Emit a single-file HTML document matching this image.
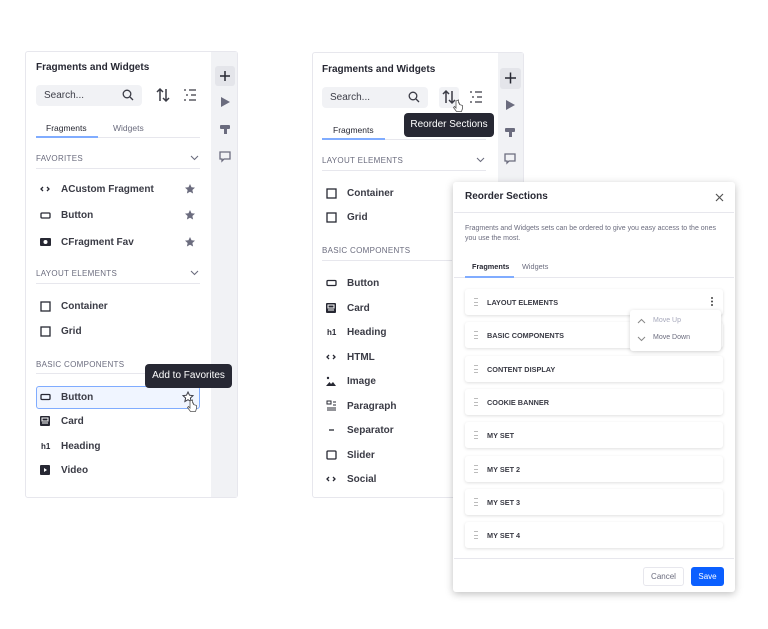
<!DOCTYPE html>
<html><head><meta charset="utf-8"><style>
*{box-sizing:border-box;margin:0;padding:0}
body{width:768px;height:629px;background:#fff;position:relative;overflow:hidden;font-family:"Liberation Sans",sans-serif;color:#272833}
.a{position:absolute}
.panel{position:absolute;background:#fff;border:1px solid #e7e7ed;border-radius:3px}
.side{position:absolute;background:#f1f2f5}
.title{position:absolute;font-size:10px;font-weight:bold;color:#272833}
.search{position:absolute;background:#f1f2f5;border-radius:4px;font-size:10px;color:#3d3e48;padding:5px 0 0 8px;height:21px}
.t{position:absolute;font-size:10px;font-weight:bold;color:#3a3b45;line-height:12px;margin-top:-5px}
.sec{position:absolute;font-size:8px;color:#6b6c7e;letter-spacing:.3px;line-height:10px;margin-top:-4px}
.ln{position:absolute;height:1px;background:#e7e7ed}
.tab{position:absolute;font-size:8.5px;line-height:10px;margin-top:-4px}
.tip{position:absolute;background:#272833;color:#fff;font-size:10px;border-radius:4px;text-align:center;line-height:24px}
.row{position:absolute;left:465px;width:258px;height:26px;background:#fff;border-radius:3px;box-shadow:0 1px 3px rgba(0,0,0,.13)}
.row span{position:absolute;left:22px;top:9px;font-size:7.3px;font-weight:bold;color:#3a3b45}
.row i{position:absolute;left:9px;top:9px;width:4px;height:8px;border-top:1px solid #bbb;border-bottom:1px solid #bbb}
.row i:after{content:"";position:absolute;left:0;top:2.5px;width:4px;height:1px;background:#bbb}
</style></head><body>

<div class="panel" style="left:25px;top:51px;width:213px;height:447px"></div>
<div class="side" style="left:211px;top:52px;width:26px;height:445px"></div>
<div class="a" style="left:215px;top:66px;width:20px;height:20px;background:#e4e5ea;border-radius:3px"></div>
<div class="title" style="left:36px;top:62px">Fragments and Widgets</div>
<div class="search" style="left:36px;top:85px;width:106px">Search...</div>
<svg class="a" style="left:122px;top:89px" width="12" height="12" viewBox="0 0 12 12"><circle cx="5" cy="5" r="3.8" fill="none" stroke="#3a3b45" stroke-width="1.3"/><path d="M8 8l3 3" stroke="#3a3b45" stroke-width="1.3"/></svg>
<div class="tab" style="left:46px;top:127px;color:#272833">Fragments</div>
<div class="tab" style="left:113px;top:127px;color:#6b6c7e">Widgets</div>
<div class="ln" style="left:36px;top:137px;width:164px"></div>
<div class="a" style="left:36px;top:136px;width:62px;height:2px;background:#80acff"></div>
<div class="sec" style="left:36px;top:158px">FAVORITES</div>
<div class="ln" style="left:36px;top:168px;width:164px"></div>
<div class="sec" style="left:36px;top:273px">LAYOUT ELEMENTS</div>
<div class="ln" style="left:36px;top:283px;width:164px"></div>
<div class="sec" style="left:36px;top:364px">BASIC COMPONENTS</div>
<div class="ln" style="left:36px;top:373px;width:164px"></div>
<div class="a" style="left:36px;top:386px;width:164px;height:23px;border:1px solid #80acff;border-radius:3px;background:#f0f5ff"></div>

<div class="panel" style="left:312px;top:52px;width:212px;height:446px"></div>
<div class="side" style="left:498px;top:53px;width:25px;height:444px"></div>
<div class="a" style="left:500px;top:68px;width:21px;height:21px;background:#e4e5ea;border-radius:3px"></div>
<div class="a" style="left:439px;top:87px;width:20px;height:21px;background:#f1f2f5;border-radius:3px"></div>
<div class="title" style="left:322px;top:64px">Fragments and Widgets</div>
<div class="search" style="left:322px;top:87px;width:106px">Search...</div>
<svg class="a" style="left:408px;top:91px" width="12" height="12" viewBox="0 0 12 12"><circle cx="5" cy="5" r="3.8" fill="none" stroke="#3a3b45" stroke-width="1.3"/><path d="M8 8l3 3" stroke="#3a3b45" stroke-width="1.3"/></svg>
<div class="tab" style="left:333px;top:129px;color:#272833">Fragments</div>
<div class="ln" style="left:322px;top:139px;width:164px"></div>
<div class="a" style="left:322px;top:138px;width:63px;height:2px;background:#80acff"></div>
<div class="sec" style="left:322px;top:160px">LAYOUT ELEMENTS</div>
<div class="ln" style="left:322px;top:170px;width:164px"></div>
<div class="sec" style="left:322px;top:250px">BASIC COMPONENTS</div>
<div class="ln" style="left:322px;top:260px;width:130px"></div>

<svg class="a" style="left:0;top:0" width="768" height="629">
<g stroke="#3a3b45" stroke-width="1.5" fill="none">
<path d="M160 101V89M157 92l3-3 3 3M166 89v12M163 98l3 3 3-3"/>
<path d="M446 103V91M443 94l3-3 3 3M452 91v12M449 100l3 3 3-3"/>
<path d="M184 90h2M189 90h7M186 95h2M191 95h5M184 100h2M189 100h7" stroke-width="1.2"/>
<path d="M470 92h2M475 92h7M472 97h2M477 97h5M470 102h2M475 102h7" stroke-width="1.2"/>
<path d="M220 76h10M225 71v10M505 78h11M510.5 72.5v11" stroke="#272833" stroke-width="1.5"/>
</g>
<g fill="#6b6c7e">
<path d="M221 97l9 5-9 5z"/><path d="M506 100l9 5-9 5z"/>
<rect x="220" y="125" width="10" height="4" rx="1"/><rect x="224" y="128" width="3" height="6"/>
<rect x="505" y="128" width="10" height="4" rx="1"/><rect x="509" y="131" width="3" height="6"/>
</g>
<g fill="none" stroke="#6b6c7e" stroke-width="1.3">
<path d="M220 152h10v7h-6l-2 2v-2h-2z"/><path d="M505 154h10v7h-6l-2 2v-2h-2z"/>
</g>
<g fill="#6b6c7e"><path d="M190 184l1.5 3.2 3.5.4-2.6 2.4.7 3.5-3.1-1.8-3.1 1.8.7-3.5-2.6-2.4 3.5-.4z"/>
<path d="M190 210l1.5 3.2 3.5.4-2.6 2.4.7 3.5-3.1-1.8-3.1 1.8.7-3.5-2.6-2.4 3.5-.4z"/>
<path d="M190 237l1.5 3.2 3.5.4-2.6 2.4.7 3.5-3.1-1.8-3.1 1.8.7-3.5-2.6-2.4 3.5-.4z"/></g>
<path d="M188 392l1.5 3.2 3.5.4-2.6 2.4.7 3.5-3.1-1.8-3.1 1.8.7-3.5-2.6-2.4 3.5-.4z" fill="#fff" stroke="#3a3b45"/>
<path d="M191 156l3.5 3.5 3.5-3.5M191 271l3.5 3.5 3.5-3.5M477 158l3.5 3.5 3.5-3.5" fill="none" stroke="#6b6c7e" stroke-width="1.1"/>
<path d="M190 401v7l-1.5-1.5-1 1 3 4h5l1-3v-3l-3-1v-1.5h-1v-3z" fill="#fff" stroke="#555" stroke-width=".8"/>
<path d="M456 101v7l-1.5-1.5-1 1 3 4h5l1-3v-3l-3-1v-1.5h-1v-3z" fill="#fff" stroke="#555" stroke-width=".8"/>
<g fill="none" stroke="#272833" stroke-width="1.3">
<path d="M43 187l-2 2 2 2M47 187l2 2-2 2"/>
<rect x="41" y="213" width="9" height="5" rx="1"/>
<rect x="41" y="302" width="9" height="9"/><rect x="41" y="327" width="9" height="9"/>
<rect x="41" y="394.5" width="9" height="5" rx="1"/>
<rect x="327" y="280.5" width="9" height="5" rx="1"/>
<rect x="327" y="189" width="9" height="9"/><rect x="327" y="213" width="9" height="9"/>
<path d="M329 355l-2 2 2 2M333 355l2 2-2 2M329 477l-2 2 2 2M333 477l2 2-2 2"/>
<rect x="327" y="451" width="9" height="8" rx="1"/>
<path d="M329 430h5"/>
</g>
<rect x="40" y="238" width="11" height="8" rx="1" fill="#272833"/><circle cx="45.5" cy="242" r="2" fill="#fff"/>
<rect x="40" y="416" width="10" height="10" rx="1" fill="#272833"/><path d="M42 418h6v3h-6zM42 423h6" stroke="#fff" fill="none"/>
<rect x="326" y="303" width="10" height="10" rx="1" fill="#272833"/><path d="M328 305h6v3h-6zM328 310h6" stroke="#fff" fill="none"/>
<rect x="40" y="465" width="10" height="10" rx="1" fill="#272833"/><path d="M44 468l3 2-3 2z" fill="#fff"/>
<path d="M326 386h10l-3-4-2 2-1.5-2z" fill="#272833"/><circle cx="328" cy="378" r="1.2" fill="#272833"/>
<path d="M327 401h4v3h-4zM333 402h3M333 405h3M327 408h9M327 410h9" stroke="#272833" fill="none" stroke-width="1"/>
</svg>
<div class="a" style="left:41px;top:442px;font-size:8px;font-weight:bold">h1</div>
<div class="a" style="left:327px;top:328px;font-size:8px;font-weight:bold">h1</div>

<div class="t" style="left:61px;top:189px">ACustom Fragment</div>
<div class="t" style="left:61px;top:215px">Button</div>
<div class="t" style="left:61px;top:242px">CFragment Fav</div>
<div class="t" style="left:61px;top:306px">Container</div>
<div class="t" style="left:61px;top:331px">Grid</div>
<div class="t" style="left:61px;top:397px">Button</div>
<div class="t" style="left:61px;top:421px">Card</div>
<div class="t" style="left:61px;top:446px">Heading</div>
<div class="t" style="left:61px;top:470px">Video</div>

<div class="t" style="left:347px;top:193px">Container</div>
<div class="t" style="left:347px;top:217px">Grid</div>
<div class="t" style="left:347px;top:283px">Button</div>
<div class="t" style="left:347px;top:308px">Card</div>
<div class="t" style="left:347px;top:332px">Heading</div>
<div class="t" style="left:347px;top:357px">HTML</div>
<div class="t" style="left:347px;top:381px">Image</div>
<div class="t" style="left:347px;top:406px">Paragraph</div>
<div class="t" style="left:347px;top:430px">Separator</div>
<div class="t" style="left:347px;top:455px">Slider</div>
<div class="t" style="left:347px;top:479px">Social</div>

<div class="tip" style="left:145px;top:364px;width:87px">Add to Favorites</div>
<div class="tip" style="left:404px;top:113px;width:90px">Reorder Sections</div>

<div class="a" style="left:453px;top:182px;width:282px;height:410px;background:#fff;border-radius:3px;box-shadow:0 2px 8px rgba(0,0,0,.25)"></div>
<div class="a" style="left:465px;top:191px;font-size:10px;font-weight:bold">Reorder Sections</div>
<svg class="a" style="left:715px;top:193px" width="9" height="9"><path d="M1 1l7 7M8 1l-7 7" stroke="#555" stroke-width="1.2"/></svg>
<div class="ln" style="left:454px;top:212px;width:280px"></div>
<div class="a" style="left:465px;top:224px;font-size:7px;color:#6b6c7e;line-height:10px;width:262px">Fragments and Widgets sets can be ordered to give you easy access to the ones you use the most.</div>
<div class="tab" style="left:472px;top:266px;font-size:7.3px;font-weight:bold;color:#272833">Fragments</div>
<div class="tab" style="left:522px;top:266px;font-size:7.3px;color:#6b6c7e">Widgets</div>
<div class="ln" style="left:454px;top:277px;width:280px"></div>
<div class="a" style="left:465px;top:276px;width:49px;height:2px;background:#80acff"></div>

<div class="row" style="top:289px"><i></i><span>LAYOUT ELEMENTS</span></div>
<div class="row" style="top:322px"><i></i><span>BASIC COMPONENTS</span></div>
<div class="row" style="top:356px"><i></i><span>CONTENT DISPLAY</span></div>
<div class="row" style="top:389px"><i></i><span>COOKIE BANNER</span></div>
<div class="row" style="top:422px"><i></i><span>MY SET</span></div>
<div class="row" style="top:456px"><i></i><span>MY SET 2</span></div>
<div class="row" style="top:489px"><i></i><span>MY SET 3</span></div>
<div class="row" style="top:522px"><i></i><span>MY SET 4</span></div>
<svg class="a" style="left:710px;top:296px" width="4" height="11"><circle cx="2" cy="2" r="1" fill="#444"/><circle cx="2" cy="5.5" r="1" fill="#444"/><circle cx="2" cy="9" r="1" fill="#444"/></svg>

<div class="a" style="left:630px;top:310px;width:91px;height:41px;background:#fff;border-radius:3px;box-shadow:0 1px 4px rgba(0,0,0,.18)"></div>
<svg class="a" style="left:637px;top:317px" width="10" height="26"><path d="M1 6l3.5-3.5L8 6M1 20l3.5 3.5L8 20" fill="none" stroke="#888" stroke-width="1"/></svg>
<div class="a" style="left:653px;top:317px;font-size:7px;color:#a7a9bc">Move Up</div>
<div class="a" style="left:653px;top:334px;font-size:7px;color:#6b6c7e">Move Down</div>

<div class="ln" style="left:454px;top:558px;width:280px"></div>
<div class="a" style="left:643px;top:567px;width:41px;height:19px;border:1px solid #e7e7ed;border-radius:3px;font-size:8px;color:#6b6c7e;text-align:center;line-height:17px">Cancel</div>
<div class="a" style="left:691px;top:567px;width:33px;height:19px;background:#0b5fff;border-radius:3px;font-size:8px;color:#fff;text-align:center;line-height:19px">Save</div>
</body></html>
